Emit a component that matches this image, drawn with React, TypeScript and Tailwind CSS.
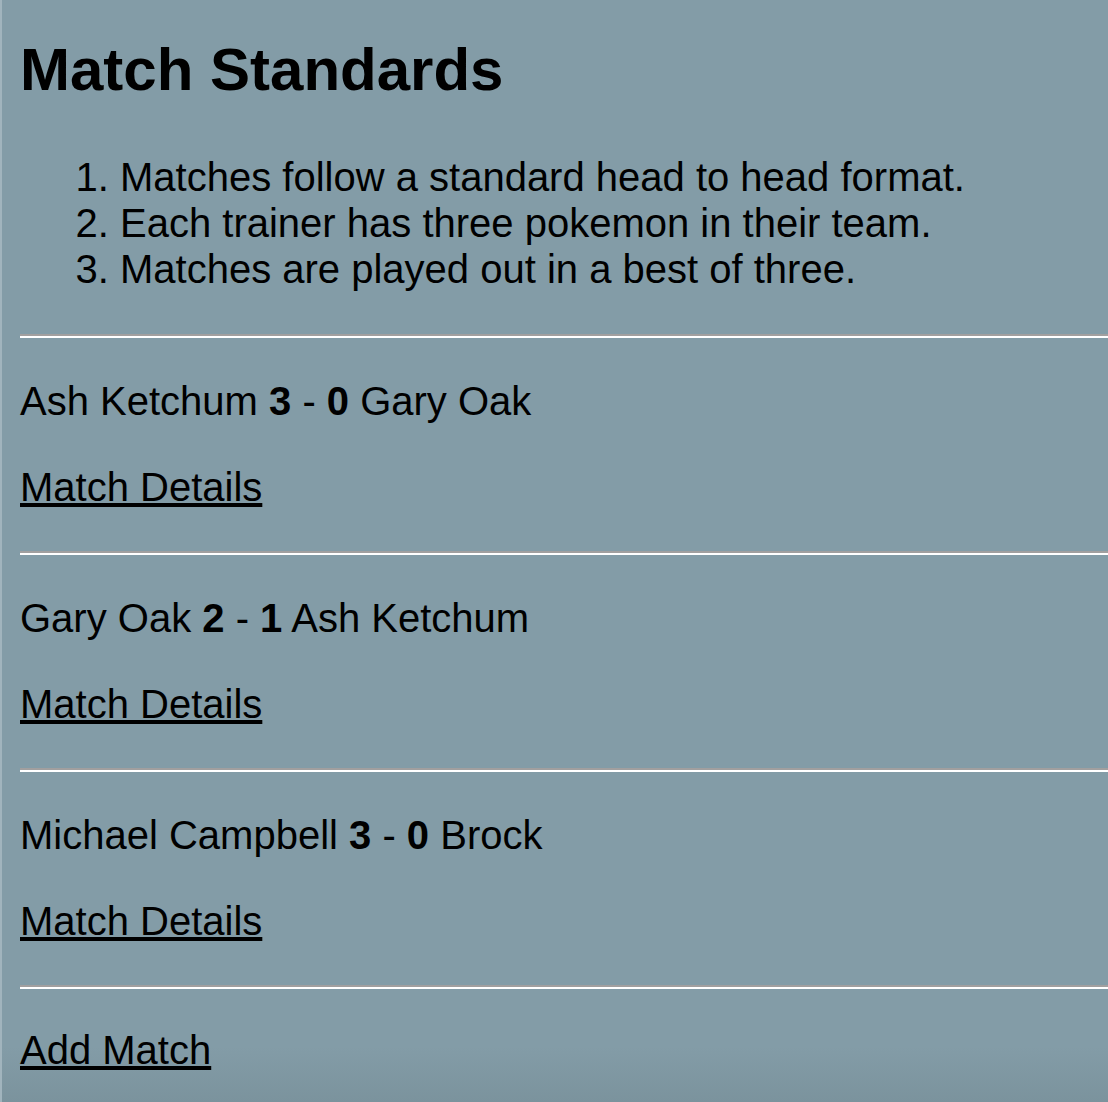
import React from 'react';

interface MatchResult {
  home: string;
  homeScore: number;
  away: string;
  awayScore: number;
}

const rules = [
  'Matches follow a standard head to head format.',
  'Each trainer has three pokemon in their team.',
  'Matches are played out in a best of three.',
];

const matches: MatchResult[] = [
  { home: 'Ash Ketchum', homeScore: 3, away: 'Gary Oak', awayScore: 0 },
  { home: 'Gary Oak', homeScore: 2, away: 'Ash Ketchum', awayScore: 1 },
  { home: 'Michael Campbell', homeScore: 3, away: 'Brock', awayScore: 0 },
];

// inset-style rule: darker top edge, white bottom edge
const Rule: React.FC<{ className?: string }> = ({ className = '' }) => (
  <hr className={`h-0 border-0 border-t-2 border-b-2 border-t-[#a19f9f] border-b-white ${className}`} />
);

const App: React.FC = () => {
  return (
    <div
      className="h-[1102px] overflow-hidden border-l-2 border-[#a1b4bd] bg-[#839ca7] bg-[linear-gradient(to_bottom,#839ca7_0%,#839ca7_95%,#7b939d_100%)] pl-[18px] text-black"
      style={{ fontFamily: '"Liberation Sans", Arial, Helvetica, sans-serif' }}
    >
      <div className="flex flex-col">
        <h2 className="mt-[35px] text-[60px] font-bold leading-[69px]">Match Standards</h2>

        <ol className="mt-[50px] list-decimal pl-[100px] text-[40px] leading-[46px]">
          {rules.map((rule) => (
            <li key={rule}>{rule}</li>
          ))}
        </ol>

        {matches.map((m, i) => (
          <div key={i} className="flex flex-col">
            <Rule className={i === 0 ? 'mt-[42px]' : 'mt-[41px]'} />
            <p className="mt-[40px] text-[40px] leading-[46px]">
              {m.home} <b>{m.homeScore}</b> - <b>{m.awayScore}</b> {m.away}
            </p>
            <p className="mt-[40px] text-[40px] leading-[46px]">
              <a href="#" className="underline">
                Match Details
              </a>
            </p>
          </div>
        ))}

        <Rule className="mt-[41px]" />
        <p className="mt-[38px] text-[40px] leading-[46px]">
          <a href="#" className="underline">
            Add Match
          </a>
        </p>
      </div>
    </div>
  );
};

export default App;
